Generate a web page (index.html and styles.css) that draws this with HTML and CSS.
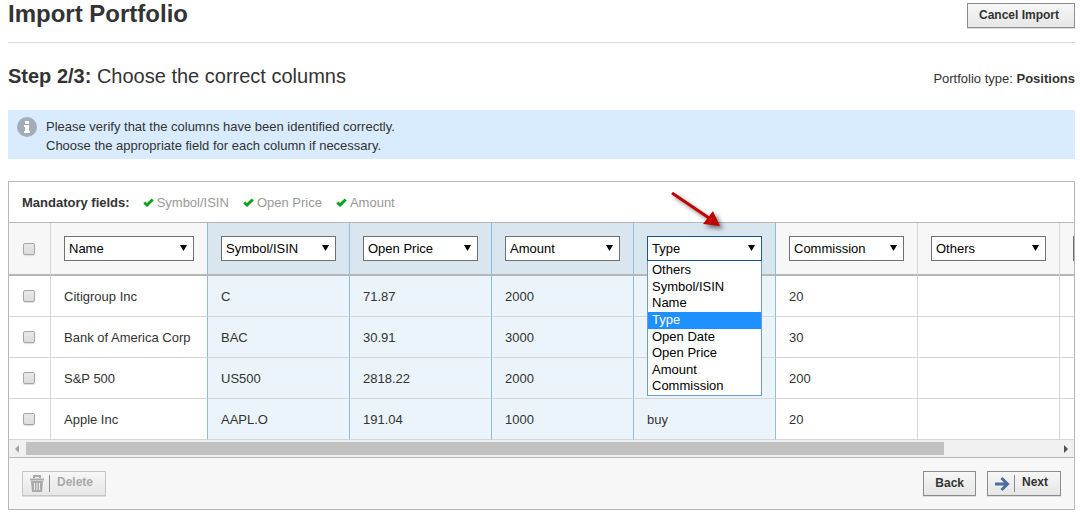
FILE: index.html
```html
<!doctype html>
<html lang="en">
	<head>
		<meta charset="utf-8" />
		<meta name="viewport" content="width=device-width,initial-scale=1" />
		<title>Import Portfolio</title>
		<link rel="stylesheet" href="styles.css">
	</head>
	<body>
		<header class="page-header">
			<h1>Import Portfolio</h1>
			<button type="button" class="btn">Cancel Import</button>
		</header>

		<div class="step">
			<h2><strong>Step 2/3:</strong> Choose the correct columns</h2>
			<p>Portfolio type: <strong>Positions</strong></p>
		</div>

		<div class="notice">
			<svg class="notice-icon" viewBox="0 0 20 20" aria-hidden="true">
				<circle cx="10" cy="10" r="10" fill="#a3adb7" />
				<path d="M8 4h4v3H8zM7 8h5v6h1v2H7v-2h1v-4H7z" fill="#fff" />
			</svg>
			<p>Please verify that the columns have been identified correctly.<br />Choose the appropriate field for each column if necessary.</p>
		</div>

		<form class="panel">
			<div class="mandatory">
				<strong>Mandatory fields:</strong>
				<ul>
					<li><svg viewBox="0 0 11 9" aria-hidden="true"><path d="M1.300 4.500 4 7 9.700 1.500" /></svg>Symbol/ISIN</li>
					<li><svg viewBox="0 0 11 9" aria-hidden="true"><path d="M1.300 4.500 4 7 9.700 1.500" /></svg>Open Price</li>
					<li><svg viewBox="0 0 11 9" aria-hidden="true"><path d="M1.300 4.500 4 7 9.700 1.500" /></svg>Amount</li>
				</ul>
			</div>

			<div class="table-scroll">
				<table>
					<colgroup>
						<col class="col-check" />
						<col class="col-name" />
						<col span="7" class="col-field" />
					</colgroup>
					<thead>
						<tr>
							<th><input type="checkbox" aria-label="Select all" /></th>
							<th><select aria-label="Column 1"><option>Name</option></select></th>
							<th class="known"><select aria-label="Column 2"><option>Symbol/ISIN</option></select></th>
							<th class="known"><select aria-label="Column 3"><option>Open Price</option></select></th>
							<th class="known"><select aria-label="Column 4"><option>Amount</option></select></th>
							<th class="known">
								<div class="dropdown">
									<select class="open" aria-label="Column 5"><option>Type</option></select>
									<ul class="dropdown-list" role="listbox" aria-label="Column 5 fields">
										<li role="option">Others</li>
										<li role="option">Symbol/ISIN</li>
										<li role="option">Name</li>
										<li role="option" aria-selected="true">Type</li>
										<li role="option">Open Date</li>
										<li role="option">Open Price</li>
										<li role="option">Amount</li>
										<li role="option">Commission</li>
									</ul>
									<svg class="pointer" viewBox="0 0 60 50" aria-hidden="true">
										<path d="M5 5 42 30" stroke="#c00000" stroke-width="3" />
										<path d="M53 38 46 23 36 36z" fill="#c00000" />
									</svg>
								</div>
							</th>
							<th><select aria-label="Column 6"><option>Commission</option></select></th>
							<th><select aria-label="Column 7"><option>Others</option></select></th>
							<th><select aria-label="Column 8"></select></th>
						</tr>
					</thead>
					<tbody>
						<tr>
							<td><input type="checkbox" aria-label="Select Citigroup Inc" /></td>
							<td>Citigroup Inc</td>
							<td class="known">C</td>
							<td class="known">71.87</td>
							<td class="known">2000</td>
							<td class="known"></td>
							<td>20</td>
							<td></td>
							<td></td>
						</tr>
						<tr>
							<td><input type="checkbox" aria-label="Select Bank of America Corp" /></td>
							<td>Bank of America Corp</td>
							<td class="known">BAC</td>
							<td class="known">30.91</td>
							<td class="known">3000</td>
							<td class="known"></td>
							<td>30</td>
							<td></td>
							<td></td>
						</tr>
						<tr>
							<td><input type="checkbox" aria-label="Select S&amp;P 500" /></td>
							<td>S&amp;P 500</td>
							<td class="known">US500</td>
							<td class="known">2818.22</td>
							<td class="known">2000</td>
							<td class="known"></td>
							<td>200</td>
							<td></td>
							<td></td>
						</tr>
						<tr>
							<td><input type="checkbox" aria-label="Select Apple Inc" /></td>
							<td>Apple Inc</td>
							<td class="known">AAPL.O</td>
							<td class="known">191.04</td>
							<td class="known">1000</td>
							<td class="known">buy</td>
							<td>20</td>
							<td></td>
							<td></td>
						</tr>
					</tbody>
				</table>
			</div>
			<div class="scrollbar" aria-hidden="true">
				<svg viewBox="0 0 17 17"><path d="M10 5v8L6 9z" fill="#a3a3a3" /></svg>
				<div class="track"><div class="thumb"></div></div>
				<svg viewBox="0 0 17 17"><path d="M7 5v8l4-4z" fill="#505050" /></svg>
			</div>

			<div class="actions">
				<button type="button" class="btn btn-icon" disabled>
					<svg viewBox="0 0 16 18" aria-hidden="true">
						<path d="M5 3V1h6v2M1 4.500h14" fill="none" stroke="#aaa" stroke-width="2" />
						<path d="M2 6h12l-1 11H3z" fill="#aaa" />
						<path d="M5.500 8v7M8 8v7M10.500 8v7" stroke="#eee" />
					</svg>
					<span>Delete</span>
				</button>
				<button type="button" class="btn btn-back">Back</button>
				<button type="button" class="btn btn-icon">
					<svg viewBox="0 0 16 18" aria-hidden="true">
						<path d="M1 9h12M7.500 3l6 6-6 6" fill="none" stroke="#4a6f9e" stroke-width="3" />
					</svg>
					<span>Next</span>
				</button>
			</div>
		</form>
	</body>
</html>
```

FILE: styles.css
```css
* {
	box-sizing: border-box;
}

body {
	margin: 0;
	padding: 0 5px 4px 8px;
	background: #fff;
	color: #333;
	font: 13px/19px "Liberation Sans", Arial, sans-serif;
}

h1,
h2,
p,
ul {
	margin: 0;
	padding: 0;
}

ul {
	list-style: none;
}

.page-header {
	display: flex;
	justify-content: space-between;
	align-items: flex-start;
	height: 43px;
	border-bottom: 1px solid #d9d9d9;

	& h1 {
		font-size: 24px;
		line-height: 28px;
	}

	& .btn {
		margin-top: 3px;
	}
}

.btn {
	height: 25px;
	border: 1px solid #8c8c8c;
	border-radius: 0;
	background: linear-gradient(#f7f7f7, #e6e6e6);
	box-shadow: 0 1px 0 #ddd;
	padding: 0 15px 1px 11px;
	color: #333;
	font: bold 12px/20px "Liberation Sans", Arial, sans-serif;
}

.step {
	display: flex;
	justify-content: space-between;
	align-items: center;
	padding: 20px 0 21px;

	& h2 {
		font-size: 20px;
		font-weight: 400;
		line-height: 26px;
	}

	& p {
		padding-top: 4px;
	}
}

.notice {
	display: flex;
	gap: 9px;
	margin-bottom: 22px;
	background: #d9ebff;
	padding: 7px 9px 4px;
}

.notice-icon {
	width: 20px;
	height: 20px;
}

.panel {
	border: 1px solid #b7b7b7;
}

.mandatory {
	display: flex;
	align-items: center;
	gap: 13px;
	height: 41px;
	border-bottom: 1px solid #b7b7b7;
	padding-left: 13px;

	& ul {
		display: flex;
		gap: 14px;
		color: #999;
	}

	& li {
		display: flex;
		align-items: center;
		gap: 3px;
	}

	& svg {
		width: 11px;
		height: 9px;
		fill: none;
		stroke: #0aa31e;
		stroke-width: 3;
	}
}

/* Vertical overflow stays visible for the arrow above the open list */
.table-scroll {
	overflow: clip visible;
}

table {
	width: 1193px;
	table-layout: fixed;
	border-collapse: separate;
	border-spacing: 0;
}

.col-check {
	width: 42px;
}

.col-name {
	width: 157px;
}

.col-field {
	width: 142px;
}

th,
td {
	height: 41px;
	border-right: 1px solid #d6d6d6;
	border-bottom: 1px solid #d6d6d6;
	padding: 0 13px;
	font-weight: 400;
	text-align: left;
}

th {
	height: 53px;
	border-bottom: 2px solid #b7b7b7;
	background: #f7f7f7;
}

.known {
	border-right-color: #8fbbe0;
	background: #ebf4fb;
}

th.known {
	background: #d9e6ef;
}

th:has(+ .known),
td:has(+ .known) {
	border-right-color: #8fbbe0;
}

input[type="checkbox"] {
	display: block;
	appearance: none;
	width: 12px;
	height: 12px;
	margin: 0 0 0 1px;
	border: 1px solid #a6a6a6;
	border-radius: 2px;
	background: linear-gradient(#e8e8e8, #dcdcdc);
	box-shadow: 0 1px 1px #ddd;
}

select {
	display: block;
	appearance: none;
	width: 100%;
	height: 25px;
	border: 1px solid #707070;
	border-radius: 0;
	background: #fff url("data:image/svg+xml,%3Csvg xmlns='http://www.w3.org/2000/svg' width='7' height='6'%3E%3Cpath d='M0 0h7L3.500 6z'/%3E%3C/svg%3E") no-repeat right 6px top 8px;
	padding: 0 4px;
	color: #000;
	font: 13px/19px "Liberation Sans", Arial, sans-serif;
}

select.open {
	border-color: #1c5699;
}

.dropdown {
	position: relative;
}

.dropdown-list {
	position: absolute;
	z-index: 1;
	top: 100%;
	left: 0;
	right: 0;
	display: grid;
	grid-auto-rows: 1fr;
	height: 135px;
	border: 1px solid #6c9bd2;
	border-top: 0;
	background: #fff;
	padding-top: 1px;
	color: #000;
	line-height: 16px;

	& li {
		padding-left: 4px;
	}

	& [aria-selected="true"] {
		background: #1e90ff;
		color: #fff;
	}
}

.pointer {
	position: absolute;
	z-index: 1;
	top: -48px;
	left: 20px;
	width: 60px;
	height: 50px;
	filter: drop-shadow(3px 3px 2px rgb(0 0 0 / 50%));
}

.scrollbar {
	display: flex;
	height: 17px;
	background: #f0f0f0;

	& svg {
		flex: none;
		width: 17px;
		height: 17px;
	}
}

.track {
	flex: 1;
	padding: 2px 0;
}

.thumb {
	width: 89%;
	height: 13px;
	background: #c1c1c1;
}

.actions {
	display: flex;
	gap: 11px;
	border-top: 1px solid #b7b7b7;
	background: #f7f7f7;
	padding: 13px;
}

.btn-back {
	margin-left: auto;
	padding: 0 11px 2px;
}

.btn-icon {
	display: flex;
	align-items: center;
	gap: 4px;
	padding: 0 12px 0 6px;

	& svg {
		width: 16px;
		height: 18px;
	}

	& span {
		height: 17px;
		border-left: 1px solid #8c8c8c;
		padding-left: 7px;
		line-height: 15px;
	}

	&:disabled {
		border-color: #c6c6c6;
		color: #aaa;
	}
}
```
